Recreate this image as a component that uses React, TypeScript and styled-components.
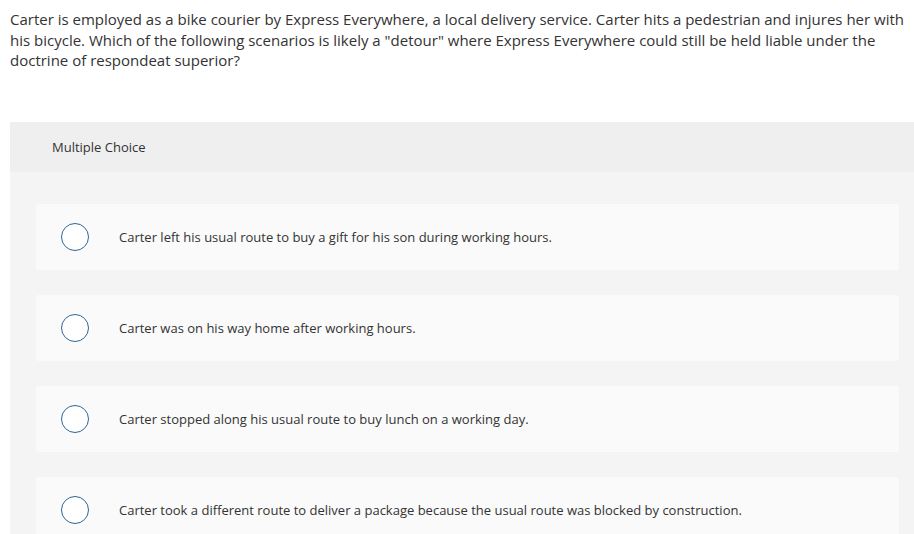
import React from 'react';
import styled, {createGlobalStyle} from 'styled-components';

const GlobalStyle = createGlobalStyle`
  body {
    margin: 0;
    background: #ffffff;
    font-family: "Open Sans", Arial, sans-serif;
    color: #333333;
  }
`

const choices = [
    'Carter left his usual route to buy a gift for his son during working hours.',
    'Carter was on his way home after working hours.',
    'Carter stopped along his usual route to buy lunch on a working day.',
    'Carter took a different route to deliver a package because the usual route was blocked by construction.',
]

export default function App() {
    return (
        <Page>
            <GlobalStyle/>
            <Question>
                Carter is employed as a bike courier by Express Everywhere, a local delivery service. Carter hits a
                pedestrian and injures her with his bicycle. Which of the following scenarios is likely a "detour" where
                Express Everywhere could still be held liable under the doctrine of respondeat superior?
            </Question>

            <Panel>
                <PanelHeader>Multiple Choice</PanelHeader>
                <Choices>
                    {choices.map((text) => (
                        <Choice key={text}>
                            <Radio/>
                            <ChoiceText>{text}</ChoiceText>
                        </Choice>
                    ))}
                </Choices>
            </Panel>
        </Page>
    );
}

const Page = styled.div`
  width: 914px;
  height: 534px;
  overflow: hidden;
`

const Question = styled.p`
  margin: 0;
  padding: 9px 0 0 10px;
  font-size: 15px;
  line-height: 20.5px;
  color: #333333;
`

const Panel = styled.section`
  margin: 51px 0 0 10px;
  background-color: #f4f4f4;
`

const PanelHeader = styled.div`
  height: 50px;
  display: flex;
  align-items: center;
  padding: 1px 0 0 42px;
  box-sizing: border-box;
  background-color: #efefef;
  font-size: 13px;
  color: #333333;
`

const Choices = styled.div`
  display: flex;
  flex-direction: column;
  gap: 25px;
  padding: 32px 15px 10px 26px;
`

const Choice = styled.div`
  height: 66px;
  display: flex;
  align-items: center;
  background-color: #fafafa;
  border-radius: 3px;
`

const Radio = styled.span`
  width: 28px;
  height: 28px;
  box-sizing: border-box;
  margin-left: 25px;
  border: 1.5px solid #2d6596;
  border-radius: 50%;
  background-color: #ffffff;
  flex-shrink: 0;
`

const ChoiceText = styled.span`
  margin: 1px 0 0 30px;
  font-size: 13px;
  color: #333333;
`
